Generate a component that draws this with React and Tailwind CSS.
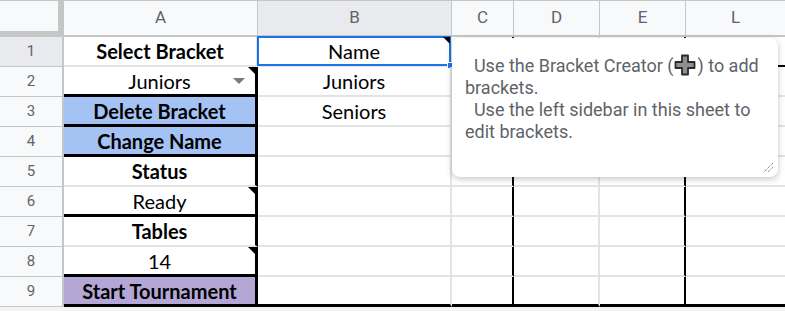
const lato = { fontFamily: "Lato, 'Liberation Sans', sans-serif" };

function RowHead({ n, active }) {
  return (
    <div
      className={`w-[64px] shrink-0 flex items-center justify-center border-r-2 border-b border-[#c4c7c5] text-[15px] text-[#5f6368] font-['Roboto',sans-serif] ${
        active ? "bg-[#e8eaed]" : "bg-[#f8f9fa]"
      }`}
    >
      {n}
    </div>
  );
}

function NoteMark() {
  return (
    <div className="absolute top-0 right-0 w-0 h-0 border-t-[7px] border-l-[7px] border-t-black border-l-transparent" />
  );
}

function Rest({ last, l1 }) {
  const b = last ? "border-b-[3px] border-b-black" : "border-b-2 border-b-[#e3e3e3]";
  return (
    <>
      <div className={`w-[62px] shrink-0 border-r-2 border-r-black ${b}`} />
      <div className={`w-[86px] shrink-0 border-r-2 border-r-[#e3e3e3] ${b}`} />
      <div className={`w-[86px] shrink-0 border-r-2 border-r-black ${b}`} />
      <div className={`flex-1 ${l1 ? "border-b-2 border-b-black" : b}`} />
    </>
  );
}

function CrossIcon() {
  return (
    <svg width="22" height="22" viewBox="0 0 22 22" className="inline-block align-[-4px] mx-[1px]">
      <path
        d="M8 1.5h6v6.5h6.5v6h-6.5v6.5h-6v-6.5h-6.5v-6h6.5z"
        fill="#8f8f8f"
        stroke="#2b2b2b"
        strokeWidth="1.8"
        strokeLinejoin="round"
      />
    </svg>
  );
}

export default function App() {
  const cellA = "w-[194px] shrink-0 relative flex items-center justify-center text-[20px] text-black";
  const cellB = "w-[194px] shrink-0 relative flex items-center justify-center text-[20px] text-black border-r-2 border-r-[#e3e3e3]";
  const gB = "border-b-2 border-b-[#e3e3e3]";

  return (
    <div className="w-[785px] h-[311px] overflow-hidden bg-[#f3f3f3] relative" style={lato}>
      {/* column headers */}
      <div className="flex h-[37px] border-t border-[#c4c7c5] text-[17px] text-[#5f6368] font-['Roboto',sans-serif]">
        <div className="w-[64px] shrink-0 bg-[#f8f9fa] border-r-[6px] border-b-[6px] border-[#c4c7c5]" />
        <div className="w-[194px] shrink-0 flex items-center justify-center bg-[#f8f9fa] border-r border-b-2 border-[#c4c7c5]">A</div>
        <div className="w-[194px] shrink-0 flex items-center justify-center bg-[#e8eaed] border-r border-b-2 border-[#c4c7c5]">B</div>
        <div className="w-[62px] shrink-0 flex items-center justify-center bg-[#f8f9fa] border-r border-b-2 border-[#c4c7c5]">C</div>
        <div className="w-[86px] shrink-0 flex items-center justify-center bg-[#f8f9fa] border-r border-b-2 border-[#c4c7c5]">D</div>
        <div className="w-[86px] shrink-0 flex items-center justify-center bg-[#f8f9fa] border-r border-b-2 border-[#c4c7c5]">E</div>
        <div className="flex-1 flex items-center justify-center bg-[#f8f9fa] border-b-2 border-[#c4c7c5]">L</div>
      </div>

      <div className="bg-white">
        {/* row 1 */}
        <div className="flex h-[30px]">
          <RowHead n={1} active />
          <div className={`${cellA} ${gB} border-r-2 border-r-[#e3e3e3] font-bold`}>Select Bracket</div>
          <div className={`${cellB} ${gB}`}>
            Name
            <div className="absolute -left-[1px] -top-[1px] -right-[1px] -bottom-[1px] border-2 border-[#1a73e8]" />
            <NoteMark />
            <div className="absolute -right-[4px] -bottom-[4px] w-[7px] h-[7px] bg-[#1a73e8] border border-white" />
          </div>
          <Rest l1 />
        </div>

        {/* row 2 */}
        <div className="flex h-[30px]">
          <RowHead n={2} />
          <div className={`${cellA} border-r-[3px] border-r-black border-b-[3px] border-b-black`}>
            Juniors
            <div className="absolute right-[10px] top-[11px] w-0 h-0 border-l-[6px] border-r-[6px] border-t-[6px] border-l-transparent border-r-transparent border-t-[#7a7a7a]" />
            <NoteMark />
          </div>
          <div className={`${cellB} ${gB}`}>Juniors</div>
          <Rest />
        </div>

        {/* row 3 */}
        <div className="flex h-[30px]">
          <RowHead n={3} />
          <div className={`${cellA} bg-[#a4c2f4] font-bold border-r-[3px] border-r-black border-b-[3px] border-b-black`}>Delete Bracket</div>
          <div className={`${cellB} ${gB}`}>Seniors</div>
          <Rest />
        </div>

        {/* row 4 */}
        <div className="flex h-[30px]">
          <RowHead n={4} />
          <div className={`${cellA} bg-[#a4c2f4] font-bold border-r-[3px] border-r-black border-b-[3px] border-b-black`}>Change Name</div>
          <div className={`${cellB} ${gB}`} />
          <Rest />
        </div>

        {/* row 5 */}
        <div className="flex h-[30px]">
          <RowHead n={5} />
          <div className={`${cellA} font-bold border-r-[3px] border-r-black ${gB}`}>Status</div>
          <div className={`${cellB} ${gB}`} />
          <Rest />
        </div>

        {/* row 6 */}
        <div className="flex h-[30px]">
          <RowHead n={6} />
          <div className={`${cellA} border-r-[3px] border-r-black border-b-[3px] border-b-black`}>
            Ready
            <NoteMark />
          </div>
          <div className={`${cellB} ${gB}`} />
          <Rest />
        </div>

        {/* row 7 */}
        <div className="flex h-[30px]">
          <RowHead n={7} />
          <div className={`${cellA} font-bold border-r-[3px] border-r-black ${gB}`}>Tables</div>
          <div className={`${cellB} ${gB}`} />
          <Rest />
        </div>

        {/* row 8 */}
        <div className="flex h-[30px]">
          <RowHead n={8} />
          <div className={`${cellA} border-r-[3px] border-r-black border-b-[3px] border-b-black`}>
            14
            <NoteMark />
          </div>
          <div className={`${cellB} ${gB}`} />
          <Rest />
        </div>

        {/* row 9 */}
        <div className="flex h-[30px]">
          <RowHead n={9} />
          <div className={`${cellA} bg-[#b4a7d6] font-bold border-r-[3px] border-r-black border-b-[3px] border-b-black`}>Start Tournament</div>
          <div className={`${cellB} border-b-[3px] border-b-black`} />
          <Rest last />
        </div>
      </div>

      {/* note popup */}
      <div className="absolute left-[452px] top-[38px] w-[326px] h-[139px] bg-white rounded-lg shadow-[0_2px_6px_rgba(60,64,67,0.3)] pl-[13px] pt-[16px] text-[18px] leading-[22px] text-[#5f6368] font-['Roboto',sans-serif]">
        <div className="whitespace-pre">  Use the Bracket Creator (<CrossIcon />) to add</div>
        <div className="whitespace-pre">brackets.</div>
        <div className="whitespace-pre">  Use the left sidebar in this sheet to</div>
        <div className="whitespace-pre">edit brackets.</div>
        <svg width="12" height="12" viewBox="0 0 12 12" className="absolute right-[4px] bottom-[4px]">
          <path d="M11 2 L2 11 M11 6 L6 11" stroke="#777" strokeWidth="1" strokeDasharray="1.2 0.8" />
        </svg>
      </div>
    </div>
  );
}
